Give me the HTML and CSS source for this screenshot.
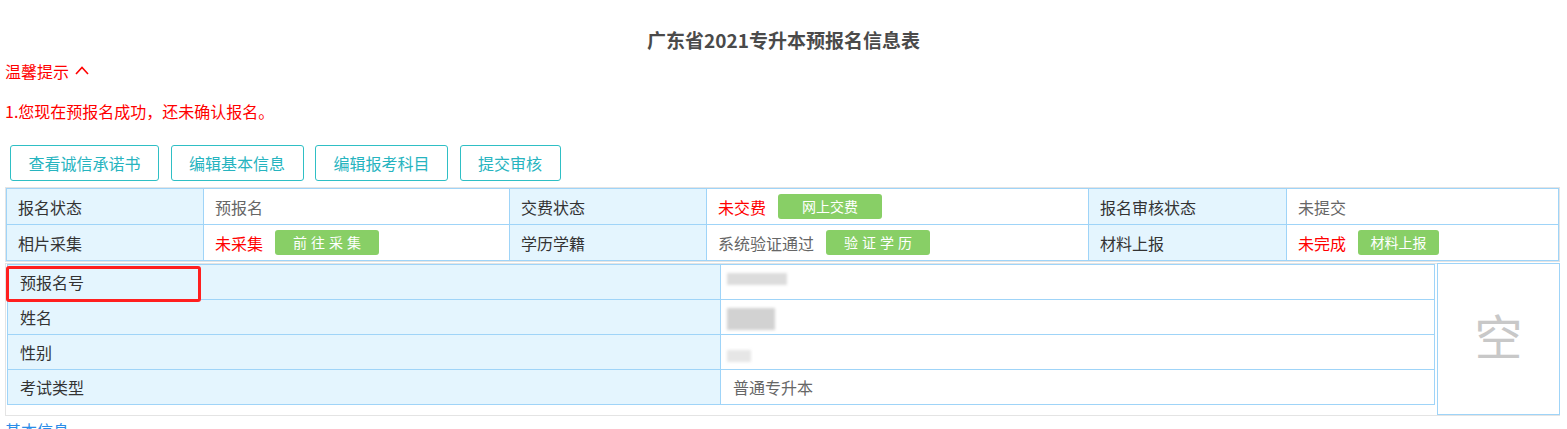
FILE: index.html
```html
<!DOCTYPE html>
<html lang="zh-CN">
<head>
<meta charset="utf-8">
<title>广东省2021专升本预报名信息表</title>
<link rel="stylesheet" href="styles.css">
</head>
<body>
<div class="page">
  <h1 class="title">广东省2021专升本预报名信息表</h1>
  <div class="tip-head">温馨提示
    <svg class="caret" width="14" height="9" viewBox="0 0 14 9"><polyline points="1,8 7,1.5 13,8" fill="none" stroke="#f00" stroke-width="1.6"/></svg>
  </div>
  <div class="tip-line">1.您现在预报名成功，还未确认报名。</div>

  <div class="actions">
    <button class="btn">查看诚信承诺书</button>
    <button class="btn">编辑基本信息</button>
    <button class="btn">编辑报考科目</button>
    <button class="btn">提交审核</button>
  </div>

  <div class="panel">
    <div class="status-grid">
      <div class="cell label">报名状态</div>
      <div class="cell value">预报名</div>
      <div class="cell label">交费状态</div>
      <div class="cell value"><span class="red">未交费</span><span class="gbtn w104">网上交费</span></div>
      <div class="cell label">报名审核状态</div>
      <div class="cell value">未提交</div>

      <div class="cell label">相片采集</div>
      <div class="cell value"><span class="red">未采集</span><span class="gbtn w104 spaced">前往采集</span></div>
      <div class="cell label">学历学籍</div>
      <div class="cell value">系统验证通过<span class="gbtn w104 spaced">验证学历</span></div>
      <div class="cell label">材料上报</div>
      <div class="cell value"><span class="red">未完成</span><span class="gbtn w81">材料上报</span></div>
    </div>
  </div>

  <div class="panel panel2">
    <div class="info-grid">
      <div class="cell label">预报名号</div>
      <div class="cell value"><span class="blur b1"></span></div>
      <div class="cell label">姓名</div>
      <div class="cell value"><span class="blur b2"></span></div>
      <div class="cell label">性别</div>
      <div class="cell value"><span class="blur b3"></span></div>
      <div class="cell label">考试类型</div>
      <div class="cell value">普通专升本</div>
    </div>
    <div class="photo">空</div>
    <div class="highlight"></div>
  </div>

  <div class="section-link">基本信息</div>
</div>
</body>
</html>
```

FILE: styles.css
```css
* { box-sizing: border-box; }
html, body { margin: 0; padding: 0; background: #fff; }
body {
  font-family: "Noto Sans CJK SC", "Noto Sans", sans-serif;
  font-size: 16px;
  color: #333;
}
.page { padding: 0 5px; }

.title {
  margin: 26px 0 0;
  font-size: 19px;
  line-height: 28px;
  font-weight: bold;
  color: #4a4a4a;
  text-align: center;
}

.tip-head {
  margin-top: 6px;
  line-height: 22px;
  color: #f00;
  display: flex;
  align-items: center;
}
.caret { margin-left: 6px; margin-top: -1px; }
.tip-line {
  margin-top: 18px;
  line-height: 22px;
  color: #f00;
}

.actions {
  margin-top: 23px;
  display: flex;
  gap: 11.5px;
  padding-left: 5px;
}
.btn {
  height: 36px;
  padding: 0 17.5px;
  border: 1px solid #2fbfc5;
  border-radius: 3px;
  background: #fff;
  color: #27b4bf;
  font-family: inherit;
  font-size: 16px;
  line-height: 34px;
}

.panel {
  margin-top: 6px;
  width: 1555px;
  border: 1px solid #e4e4e4;
}
.status-grid {
  display: grid;
  grid-template-columns: 196px 305px 196px 381px 197px 271px;
  grid-auto-rows: 35px;
  gap: 1px;
  background: #9fd4f8;
  border: 1px solid #9fd4f8;
}
.cell {
  display: flex;
  align-items: center;
  padding-left: 11px;
  white-space: nowrap;
}
.label { background: #e4f5fe; color: #333; }
.value { background: #fff; color: #666; }
.red { color: #f00; }

.gbtn {
  display: inline-block;
  height: 25px;
  line-height: 25px;
  margin-left: 12px;
  border-radius: 3px;
  background: #88cf66;
  color: #fff;
  font-size: 14px;
  text-align: center;
}
.w104 { width: 104px; }
.w81 { width: 81px; }
.spaced { letter-spacing: 4px; padding-left: 4px; }

.panel2 {
  margin-top: 1px;
  position: relative;
  display: flex;
  align-items: flex-start;
}
.info-grid {
  margin-left: 1px;
  display: grid;
  grid-template-columns: 712px 713px;
  grid-auto-rows: 34px;
  gap: 1px;
  background: #9fd4f8;
  border: 1px solid #9fd4f8;
  width: 1428px;
}
.info-grid .cell { padding-left: 12px; }
.photo {
  margin: -1px -1px 0 2px;
  width: 123px;
  height: 152px;
  border: 1px solid #9fd4f8;
  display: flex;
  align-items: center;
  justify-content: center;
  font-size: 48px;
  color: #c8c8c8;
  padding-bottom: 10px;
}
.highlight {
  position: absolute;
  left: 0;
  top: 2px;
  width: 195px;
  height: 36px;
  border: 3px solid #ff1f1f;
  border-radius: 3px;
}

.blur {
  display: inline-block;
  background: #dcdcdc;
  filter: blur(1.5px);
  margin-left: -6px;
}
.b1 { width: 60px; height: 12px; margin-top: -6px; }
.b2 { width: 48px; height: 22px; background: #d2d2d2; margin-top: 4px; }
.b3 { width: 24px; height: 12px; background: #e6e6e6; margin-top: 8px; }

.section-link {
  margin-top: 3px;
  line-height: 22px;
  color: #2a8ce8;
}
```
